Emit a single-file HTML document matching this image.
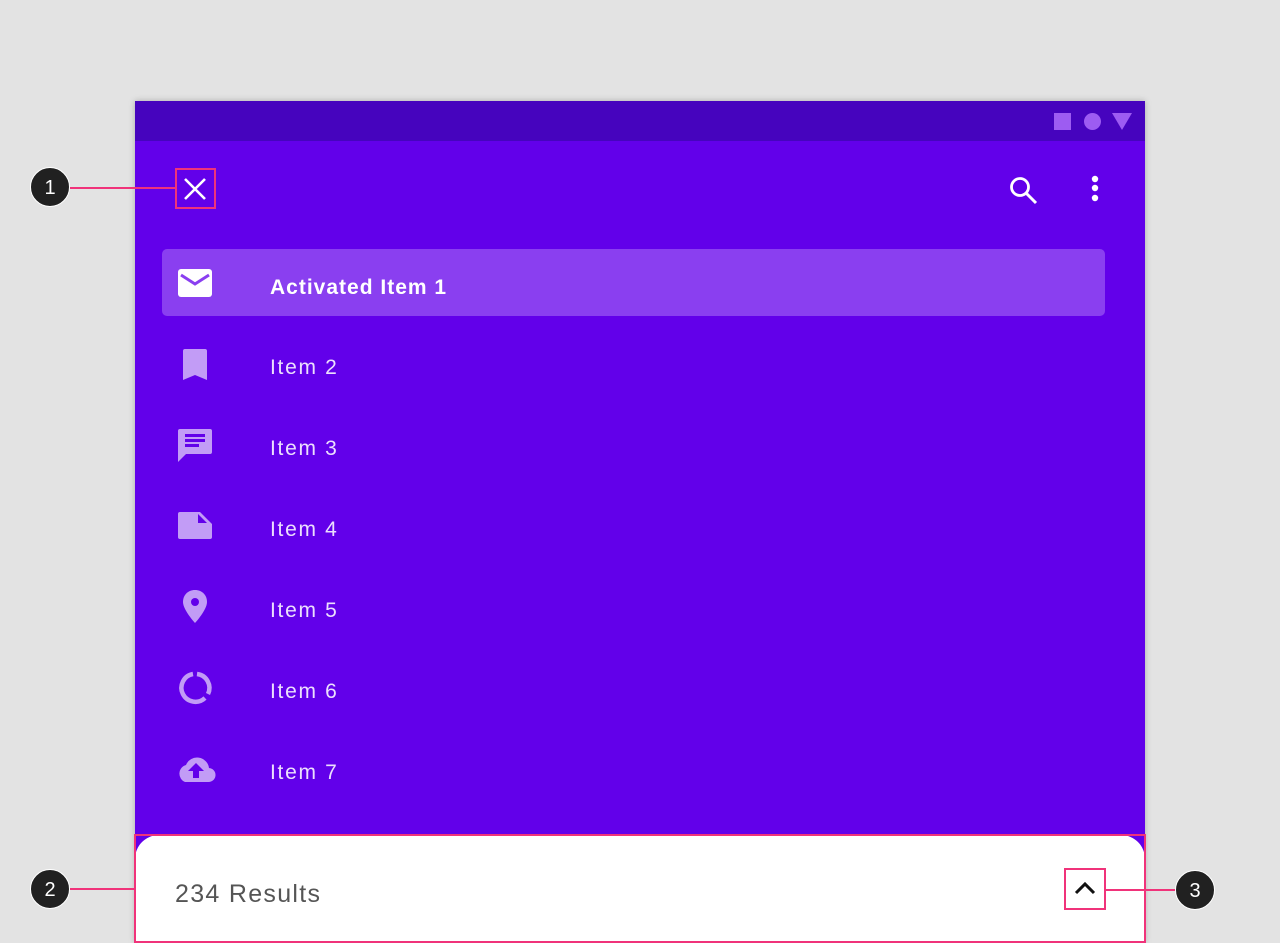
<!DOCTYPE html>
<html><head><meta charset="utf-8">
<style>
*{margin:0;padding:0;box-sizing:border-box}
body{width:1280px;height:943px;background:#e3e3e3;position:relative;overflow:hidden;font-family:"Liberation Sans",Roboto,sans-serif}
.frame{position:absolute;left:135px;top:101px;width:1010px;height:842px;background:#6200ea;box-shadow:0 0 6px rgba(0,0,0,.25)}
.status{position:absolute;left:0;top:0;width:1010px;height:40px;background:#4604be}
.act{position:absolute;left:27px;top:148px;width:943px;height:67px;background:#8a3ff0;border-radius:5px}
.item{position:absolute;left:135px;font-size:21px;color:#ecdffd;line-height:24px;letter-spacing:1.7px}
.ic{position:absolute;left:40px}
.sheet{position:absolute;left:0;top:734px;width:1010px;height:108px;background:#fff;border-radius:24px 24px 0 0}
.pink{position:absolute;border:2px solid #f0337a}
.pl{position:absolute;height:2px;background:#f0337a}
.num{position:absolute;width:40px;height:40px;border-radius:50%;background:#212121;color:#fff;font-size:20px;text-align:center;line-height:40px;border:1px solid #fff}
</style></head><body>
<div class="frame">
 <div class="status">
  <div style="position:absolute;left:919px;top:12px;width:17px;height:17px;background:#9d5cf2"></div>
  <div style="position:absolute;left:949px;top:12px;width:17px;height:17px;border-radius:50%;background:#9d5cf2"></div>
  <svg style="position:absolute;left:977px;top:12px" width="20" height="17"><polygon points="0,0 20,0 10,17" fill="#9d5cf2"/></svg>
 </div>
 <svg style="position:absolute;left:48px;top:76px" width="24" height="24"><path d="M2 2L22 22M22 2L2 22" stroke="#fff" stroke-width="2.6"/></svg>
 <svg style="position:absolute;left:872px;top:73px" width="32" height="32"><circle cx="13" cy="13" r="8.5" stroke="#fff" stroke-width="2.8" fill="none"/><path d="M19 19L29 29" stroke="#fff" stroke-width="3"/></svg>
 <svg style="position:absolute;left:954px;top:73px" width="12" height="30"><circle cx="6" cy="5" r="3.2" fill="#fff"/><circle cx="6" cy="14" r="3.2" fill="#fff"/><circle cx="6" cy="24" r="3.2" fill="#fff"/></svg>
 <div class="act"></div>
 <svg class="ic" style="top:167px" width="40" height="30"><rect x="3" y="1" width="34" height="28" rx="3" fill="#fff"/><path d="M6 7L20 16L34 7" stroke="#8a3ff0" stroke-width="3" fill="none"/></svg>
 <div class="item" style="top:175px;color:#fff;font-weight:bold;font-size:21px;letter-spacing:1px">Activated Item 1</div>
 <svg class="ic" style="top:247px" width="40" height="34"><path d="M8 1H30Q32 1 32 3V32L20 27L8 32V3Q8 1 10 1Z" fill="#c29cf6"/></svg>
 <div class="item" style="top:255px">Item 2</div>
 <svg class="ic" style="top:327px" width="40" height="36"><path d="M5 1H35Q37 1 37 3V24Q37 26 35 26H11L3 34V3Q3 1 5 1Z" fill="#c29cf6"/><rect x="10" y="6" width="20" height="3" fill="#6200ea"/><rect x="10" y="11" width="20" height="3" fill="#6200ea"/><rect x="10" y="16" width="14" height="3" fill="#6200ea"/></svg>
 <div class="item" style="top:336px">Item 3</div>
 <svg class="ic" style="top:410px" width="40" height="30"><path d="M5 1H25L37 13V26Q37 28 35 28H5Q3 28 3 26V3Q3 1 5 1Z" fill="#c29cf6"/><path d="M23 3V12H32Z" fill="#6200ea"/></svg>
 <div class="item" style="top:417px">Item 4</div>
 <svg class="ic" style="top:488px" width="40" height="36"><path d="M20 1C13 1 8 6 8 13C8 21 20 34 20 34C20 34 32 21 32 13C32 6 27 1 20 1Z" fill="#c29cf6"/><circle cx="20" cy="13" r="4" fill="#6200ea"/></svg>
 <div class="item" style="top:498px">Item 5</div>
 <svg class="ic" style="top:569px" width="40" height="36"><path d="M22 4A14 14 0 0 1 33 24" stroke="#c29cf6" stroke-width="4.5" fill="none"/><path d="M30 28A14 14 0 1 1 18 4" stroke="#c29cf6" stroke-width="4.5" fill="none"/></svg>
 <div class="item" style="top:579px">Item 6</div>
 <svg class="ic" style="top:654px" width="44" height="30"><path d="M10 27H33A7 7 0 0 0 34 13A12 12 0 0 0 11 10A9 9 0 0 0 10 27Z" fill="#c29cf6"/><path d="M21 8L13 16H18V23H24V16H29Z" fill="#6200ea"/></svg>
 <div class="item" style="top:660px">Item 7</div>
 <div class="sheet">
  <div style="position:absolute;left:40px;top:45px;font-size:25px;color:#555;letter-spacing:1.3px">234 Results</div>
  <svg style="position:absolute;left:939px;top:46px" width="22" height="14"><path d="M2 12L11 3L20 12" stroke="#111" stroke-width="3" fill="none"/></svg>
 </div>
</div>
<div class="pink" style="left:175px;top:168px;width:41px;height:41px"></div>
<div class="pl" style="left:70px;top:187px;width:105px"></div>
<div class="num" style="left:30px;top:167px">1</div>
<div class="pink" style="left:134px;top:834px;width:1012px;height:109px"></div>
<div class="pl" style="left:70px;top:888px;width:65px"></div>
<div class="num" style="left:30px;top:869px">2</div>
<div class="pink" style="left:1064px;top:868px;width:42px;height:42px"></div>
<div class="pl" style="left:1105px;top:889px;width:72px"></div>
<div class="num" style="left:1175px;top:870px">3</div>
</body></html>
